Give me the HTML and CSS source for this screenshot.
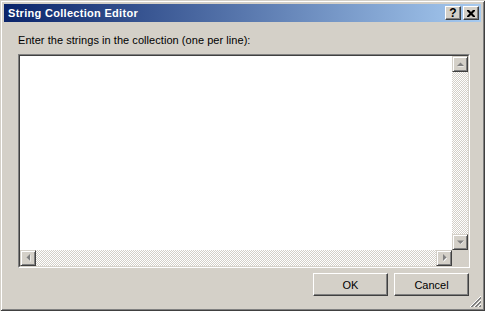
FILE: index.html
```html
<!DOCTYPE html>
<html lang="en">
<head>
    <meta charset="UTF-8">
    <title>String Collection Editor</title>
    <link rel="stylesheet" href="styles.css">
</head>
<body>
    <div class="window">
        <div class="titlebar">
            <span class="title">String Collection Editor</span>
            <div class="caption-buttons">
                <button class="cap-btn help">?</button>
                <button class="cap-btn close">
                    <svg width="8" height="7" viewBox="0 0 8 7">
                        <path d="M0 0h2l2 2l2 -2h2v1l-2.5 2.5l2.5 2.5v1h-2l-2 -2l-2 2h-2v-1l2.5 -2.5l-2.5 -2.5z" fill="#000"/>
                    </svg>
                </button>
            </div>
        </div>

        <div class="content">
            <label class="prompt">Enter the strings in the collection (one per line):</label>

            <div class="editor">
                <div class="editor-inner">
                    <div class="text-area"></div>
                    <div class="vscroll">
                        <div class="scroll-btn">
                            <svg width="7" height="5" viewBox="0 0 7 5"><path d="M1 4.5h6l-3 -3z" fill="#fff"/><path d="M0 4h7l-3.5 -3.5z" fill="#808080"/></svg>
                        </div>
                        <div class="track"></div>
                        <div class="scroll-btn">
                            <svg width="7" height="5" viewBox="0 0 7 5"><path d="M1 1h6l-3 3.5z" fill="#fff"/><path d="M0 0.5h7l-3.5 3.5z" fill="#808080"/></svg>
                        </div>
                    </div>
                    <div class="hscroll">
                        <div class="scroll-btn">
                            <svg width="5" height="8" viewBox="0 0 5 8"><path d="M4.5 1v7l-3.5 -3.5z" fill="#fff"/><path d="M4 0v7l-3.5 -3.5z" fill="#808080"/></svg>
                        </div>
                        <div class="track"></div>
                        <div class="scroll-btn">
                            <svg width="5" height="8" viewBox="0 0 5 8"><path d="M1.5 1v7l3.5 -3.5z" fill="#fff"/><path d="M1 0v7l3.5 -3.5z" fill="#808080"/></svg>
                        </div>
                    </div>
                    <div class="corner"></div>
                </div>
            </div>

            <div class="actions">
                <button class="push-btn">OK</button>
                <button class="push-btn">Cancel</button>
            </div>
        </div>

        <svg class="grip" width="13" height="13" viewBox="0 0 13 13">
            <path d="M12 1L1 12M12 5L5 12M12 9L9 12" stroke="#fff" stroke-width="1"/>
            <path d="M12 2L2 12M12 3L3 12M12 6L6 12M12 7L7 12M12 10L10 12M12 11L11 12" stroke="#808080" stroke-width="1"/>
        </svg>
    </div>
</body>
</html>
```

FILE: styles.css
```css
body {
    margin: 0;
    background-color: #ffffff;
    font-family: "Liberation Sans", Arial, sans-serif;
    font-size: 11px;
}
.window {
    position: relative;
    width: 485px;
    height: 311px;
    box-sizing: border-box;
    padding: 4px;
    background-color: #d4d0c8;
    box-shadow: inset 1px 1px #d4d0c8, inset -1px -1px #404040, inset 2px 2px #ffffff, inset -2px -2px #808080;
    display: flex;
    flex-direction: column;
}
/* Barra de titulo */
.titlebar {
    height: 18px;
    display: flex;
    align-items: center;
    justify-content: space-between;
    padding: 0 2px 0 4px;
    background: linear-gradient(to right, #0a246a, #a6caf0);
}
.title {
    color: #ffffff;
    font-weight: bold;
    font-size: 11px;
    letter-spacing: 0.3px;
}
.caption-buttons {
    display: flex;
    gap: 2px;
}
.cap-btn {
    width: 16px;
    height: 14px;
    padding: 0;
    margin: 0;
    box-sizing: border-box;
    background-color: #d4d0c8;
    border: 1px solid;
    border-color: #ffffff #404040 #404040 #ffffff;
    box-shadow: inset -1px -1px #808080;
    display: flex;
    align-items: center;
    justify-content: center;
    font-family: "Liberation Sans", Arial, sans-serif;
    font-weight: bold;
    font-size: 12px;
    line-height: 12px;
    color: #000;
}
.content {
    flex: 1;
    display: flex;
    flex-direction: column;
    padding: 0 11px 0 14px;
}
.prompt {
    display: block;
    padding-top: 12px;
    margin-bottom: 7px;
    line-height: 13px;
    color: #000;
    letter-spacing: 0.05px;
}
/* Caja de texto */
.editor {
    height: 214px;
    box-sizing: border-box;
    border: 1px solid;
    border-color: #808080 #ffffff #ffffff #808080;
}
.editor-inner {
    height: 100%;
    box-sizing: border-box;
    border: 1px solid;
    border-color: #404040 #d4d0c8 #d4d0c8 #404040;
    display: grid;
    grid-template-columns: 1fr 16px;
    grid-template-rows: 1fr 16px;
}
.text-area {
    background-color: #ffffff;
}
.vscroll {
    display: flex;
    flex-direction: column;
}
.hscroll {
    display: flex;
}
.track {
    flex: 1;
    background-color: #ffffff;
    background-image: conic-gradient(#d4d0c8 25%, #ffffff 0 50%, #d4d0c8 0 75%, #ffffff 0);
    background-size: 2px 2px;
}
.scroll-btn {
    width: 16px;
    height: 16px;
    box-sizing: border-box;
    background-color: #d4d0c8;
    border: 1px solid;
    border-color: #d4d0c8 #404040 #404040 #d4d0c8;
    box-shadow: inset 1px 1px #ffffff, inset -1px -1px #808080;
    display: flex;
    align-items: center;
    justify-content: center;
}
.corner {
    background-color: #d4d0c8;
}
/* Botones */
.actions {
    display: flex;
    justify-content: flex-end;
    gap: 6px;
    margin-top: 5px;
    padding-right: 1px;
}
.push-btn {
    width: 75px;
    height: 23px;
    box-sizing: border-box;
    margin: 0;
    padding: 0;
    background-color: #d4d0c8;
    border: 1px solid;
    border-color: #ffffff #404040 #404040 #ffffff;
    box-shadow: inset -1px -1px #808080;
    font-family: "Liberation Sans", Arial, sans-serif;
    font-size: 11px;
    color: #000;
}
.grip {
    position: absolute;
    right: 3px;
    bottom: 3px;
}
```
